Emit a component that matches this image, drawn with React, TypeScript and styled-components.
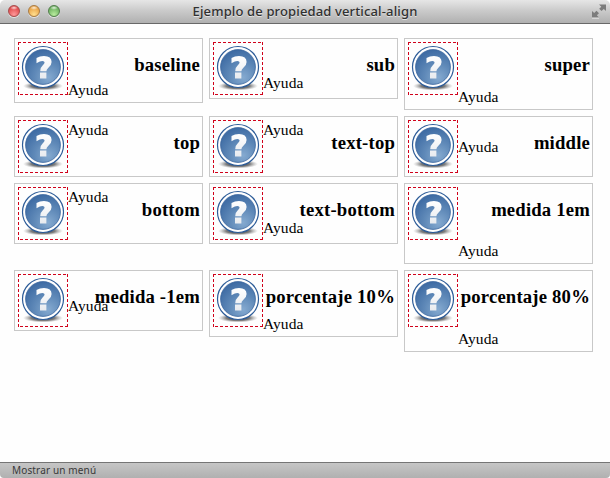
import React from 'react';
import styled, { createGlobalStyle } from 'styled-components';

const GlobalStyle = createGlobalStyle`
  * { box-sizing: border-box; }
  body { margin: 0; background: #fff; overflow: hidden; }
`;

const Window = styled.div`
  width: 610px;
  height: 478px;
  display: flex;
  flex-direction: column;
  background: #fefefe;
  border-radius: 5px 5px 4px 4px;
  overflow: hidden;
`;

const TitleBar = styled.header`
  height: 24px;
  flex: none;
  display: grid;
  grid-template-columns: 66px 1fr 66px;
  align-items: center;
  padding: 0 3px 1px 8px;
  background: linear-gradient(#e6e6e6, #cbcbcb 45%, #b0b0b0);
  border-bottom: 1px solid #686868;
`;

const Lights = styled.div`
  display: flex;
  gap: 8px;
`;

const Light = styled.span<{ $edge: string; $fill: string; $glow: string }>`
  width: 12px;
  height: 12px;
  border-radius: 50%;
  border: 1px solid ${(p) => p.$edge};
  background:
    radial-gradient(ellipse 4px 2px at 50% 18%, #fffc, #fff0),
    radial-gradient(circle at 50% 85%, ${(p) => p.$glow}, ${(p) => p.$fill} 75%);
  box-shadow: 0 1px 0 #e4e4e4;
`;

const Title = styled.h1`
  margin: 0;
  padding-right: 5px;
  text-align: center;
  white-space: nowrap;
  color: #303030;
  font: 500 13px/20px "Noto Sans", sans-serif;
  letter-spacing: 0.14px;
  text-shadow: 0 1px 0 #e2e2e2;
`;

const ExpandIcon = styled.svg`
  justify-self: end;
  display: block;
`;

const Page = styled.main`
  flex: 1;
  padding: 14px;
`;

const Examples = styled.div`
  display: grid;
  grid-template-columns: repeat(3, 189px);
  gap: 6px;
  align-items: start;
`;

const Card = styled.section<{ $height: number }>`
  height: ${(p) => p.$height}px;
  display: grid;
  grid-template-columns: 50px 1fr;
  align-items: start;
  padding: 3px 2px 3px 3px;
  border: 1px solid #c8c8c8;
`;

const Help = styled.svg`
  grid-area: 1 / 1;
  display: block;
`;

const Label = styled.span<{ $baseline: number }>`
  grid-area: 1 / 2;
  padding-top: ${(p) => p.$baseline - 18}px;
  color: #000;
  font: 15.5px/18px "Liberation Serif", serif;
  letter-spacing: 0.15px;
`;

const Name = styled.h2`
  grid-area: 1 / 2;
  justify-self: end;
  margin: 12px 0 0;
  white-space: nowrap;
  color: #000;
  font: bold 18.7px/22px "Liberation Serif", serif;
  letter-spacing: 0.18px;
`;

const StatusBar = styled.footer`
  height: 16px;
  flex: none;
  padding-left: 12px;
  background: linear-gradient(#c6c6c6, #b0b0b0);
  border-top: 1px solid #757575;
  color: #383838;
  font: 10px/15px "Noto Sans", sans-serif;
  letter-spacing: 0.14px;
`;

const examples = [
  { name: 'baseline', height: 65, baseline: 57 },
  { name: 'sub', height: 61, baseline: 50 },
  { name: 'super', height: 72, baseline: 64 },
  { name: 'top', height: 61, baseline: 19 },
  { name: 'text-top', height: 61, baseline: 19 },
  { name: 'middle', height: 61, baseline: 36 },
  { name: 'bottom', height: 61, baseline: 19 },
  { name: 'text-bottom', height: 61, baseline: 50 },
  { name: 'medida 1em', height: 81, baseline: 73 },
  { name: 'medida -1em', height: 61, baseline: 41 },
  { name: 'porcentaje 10%', height: 67, baseline: 59 },
  { name: 'porcentaje 80%', height: 82, baseline: 74 },
];

function HelpIcon({ id }: { id: string }) {
  return (
    <Help width="50" height="53" viewBox="0 0 50 53" aria-hidden="true">
      <defs>
        <radialGradient id={`${id}-disc`} cx="0.65" cy="0.8" r="0.8">
          <stop offset="0" stopColor="#85aad0" />
          <stop offset="0.5" stopColor="#5f89b8" />
          <stop offset="1" stopColor="#3f6ca4" />
        </radialGradient>
        <radialGradient id={`${id}-shadow`}>
          <stop offset="0" stopColor="#222" />
          <stop offset="0.6" stopColor="#555" stopOpacity="0.75" />
          <stop offset="1" stopColor="#999" stopOpacity="0" />
        </radialGradient>
        <linearGradient id={`${id}-mark`} x2="0" y2="1">
          <stop offset="0" stopColor="#fff" />
          <stop offset="1" stopColor="#e8ebef" />
        </linearGradient>
      </defs>
      <ellipse cx="25" cy="44" rx="20" ry="4.5" fill={`url(#${id}-shadow)`} />
      <circle cx="25" cy="25" r="20.5" fill="#fff" stroke="#2d5c98" strokeWidth="1.2" />
      <circle cx="25" cy="25" r="17.4" fill={`url(#${id}-disc)`} stroke="#38649d" strokeWidth="0.8" />
      <path
        d="M18.5 16Q21.8 14 26 14Q33.6 14 33.6 20Q33.6 23.4 30.4 25.7Q28.4 27.2 28.4 29.2H22.2Q22 25.6 24.6 23.4Q26.6 21.7 26.6 20.5Q26.6 19 24.4 19Q22.2 19 18.5 21.2ZM22 30.4H28.4V36.4H22Z"
        fill={`url(#${id}-mark)`}
      />
      <path
        d="M0 .5H50M49.5 0V53M50 52.5H0M.5 53V0"
        fill="none"
        stroke="#d0021b"
        strokeDasharray="3 2"
        shapeRendering="crispEdges"
      />
    </Help>
  );
}

export default function App() {
  return (
    <>
      <GlobalStyle />
      <Window>
        <TitleBar>
          <Lights>
            <Light $edge="#a64b4b" $fill="#df4748" $glow="#ff999a" />
            <Light $edge="#a87b43" $fill="#e8a043" $glow="#ffdf8f" />
            <Light $edge="#527d4b" $fill="#69ae5c" $glow="#b9ec9e" />
          </Lights>
          <Title>Ejemplo de propiedad vertical-align</Title>
          <ExpandIcon width="16" height="15" viewBox="0 0 16 15">
            <path d="M8 0.5H15V7L12.8 5L10.5 7L8.2 4.8L10.3 2.8ZM1 7L3.2 9L5.5 6.8L8 9.2L5.8 11.3L8 13.5H1Z" fill="#7c7c7c" />
            <path d="M1 14.2H8" stroke="#e2e2e2" />
          </ExpandIcon>
        </TitleBar>
        <Page>
          <Examples>
            {examples.map((item, index) => (
              <Card key={item.name} $height={item.height}>
                <HelpIcon id={`help-${index}`} />
                <Label $baseline={item.baseline}>Ayuda</Label>
                <Name>{item.name}</Name>
              </Card>
            ))}
          </Examples>
        </Page>
        <StatusBar>Mostrar un menú</StatusBar>
      </Window>
    </>
  );
}
